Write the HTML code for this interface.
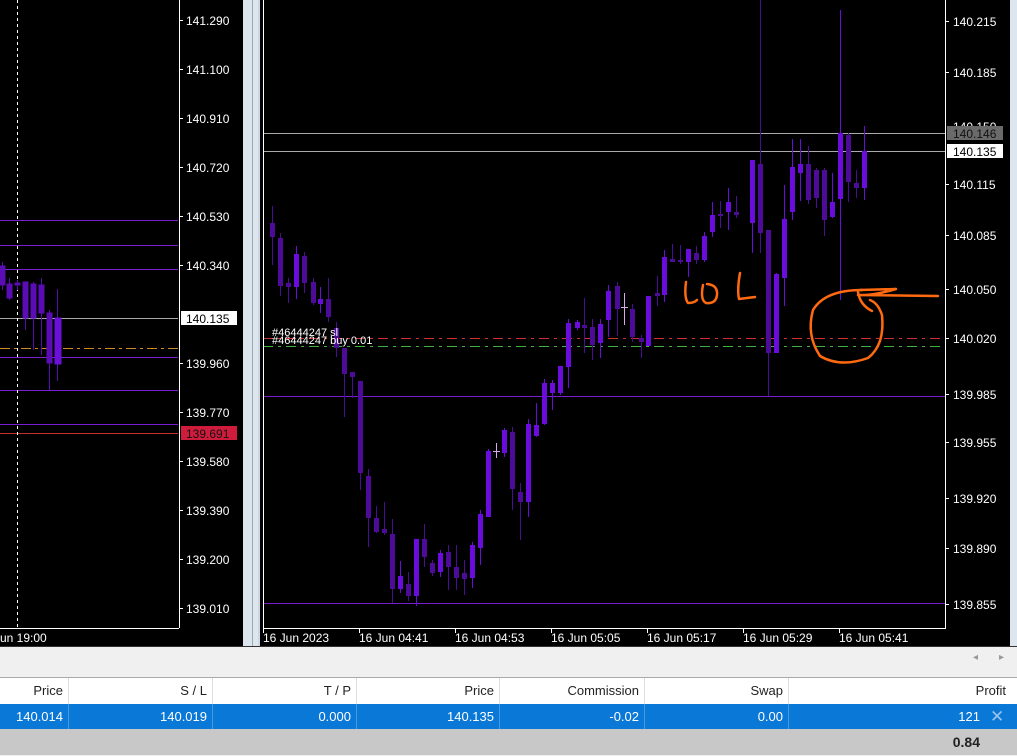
<!DOCTYPE html>
<html><head><meta charset="utf-8"><style>
body{margin:0;width:1017px;height:755px;overflow:hidden;background:#f0f0f0;font-family:"Liberation Sans",sans-serif;position:relative}
svg text{font-family:"Liberation Sans",sans-serif;font-size:12px;fill:#fff}
.tb{position:absolute;left:0;width:1017px;font-size:13px;color:#222}
.c{position:absolute;top:0;height:100%;text-align:right;box-sizing:border-box;padding-right:5px;line-height:25px}
</style></head><body>
<svg width="1017" height="647" style="position:absolute;left:0;top:0">
<rect x="0" y="0" width="1017" height="647" fill="#000"/>
<rect x="243" y="0" width="15" height="647" fill="#dde6ef"/>
<rect x="252" y="0" width="1" height="647" fill="#9aa"/>
<rect x="258" y="0" width="2" height="647" fill="#cfd8e2"/>
<rect x="1010" y="0" width="7" height="647" fill="#dde6ef"/>
<g stroke-width="1">
<line x1="0" y1="220.5" x2="178" y2="220.5" stroke="#7a1fd0"/>
<line x1="0" y1="245.5" x2="178" y2="245.5" stroke="#7a1fd0"/>
<line x1="0" y1="269.5" x2="178" y2="269.5" stroke="#7a1fd0"/>
<line x1="0" y1="318.5" x2="178" y2="318.5" stroke="#aaa"/>
<line x1="0" y1="348.5" x2="178" y2="348.5" stroke="#d08a20" stroke-dasharray="10,4,3,4"/>
<line x1="0" y1="357.5" x2="178" y2="357.5" stroke="#7a1fd0"/>
<line x1="0" y1="390.5" x2="178" y2="390.5" stroke="#7a1fd0"/>
<line x1="0" y1="424.5" x2="178" y2="424.5" stroke="#7a1fd0"/>
<line x1="0" y1="433.5" x2="178" y2="433.5" stroke="#c03030"/>
<line x1="17.5" y1="0" x2="17.5" y2="628" stroke="#fff" stroke-dasharray="3,3"/>
</g>
<g fill="#5a0db5" stroke="#5a0db5">
<line x1="2.5" y1="262" x2="2.5" y2="290"/><rect x="0" y="266" width="5" height="19"/>
<line x1="9.5" y1="278" x2="9.5" y2="300"/><rect x="7" y="284" width="5" height="14"/>
<line x1="17.5" y1="280" x2="17.5" y2="290"/><rect x="15" y="283" width="5" height="2"/>
<line x1="25.5" y1="282" x2="25.5" y2="330"/><rect x="23" y="282" width="5" height="36"/>
<line x1="33.5" y1="282" x2="33.5" y2="350"/><rect x="31" y="284" width="5" height="34"/>
<line x1="41.5" y1="278" x2="41.5" y2="355"/><rect x="39" y="285" width="5" height="28"/>
<line x1="49.5" y1="310" x2="49.5" y2="390"/><rect x="47" y="313" width="5" height="50"/>
<line x1="57.5" y1="289" x2="57.5" y2="381"/><rect x="55" y="318" width="6" height="46" fill="#6a10d8" stroke="#6a10d8"/>
</g>
<line x1="179.5" y1="0" x2="179.5" y2="628" stroke="#fff"/>
<line x1="0" y1="628.5" x2="179" y2="628.5" stroke="#fff"/>
<g stroke="#fff">
<line x1="179" y1="20.5" x2="183" y2="20.5"/><line x1="179" y1="69.5" x2="183" y2="69.5"/><line x1="179" y1="118.5" x2="183" y2="118.5"/><line x1="179" y1="167.5" x2="183" y2="167.5"/><line x1="179" y1="216.5" x2="183" y2="216.5"/><line x1="179" y1="265.5" x2="183" y2="265.5"/><line x1="179" y1="363.5" x2="183" y2="363.5"/><line x1="179" y1="412.5" x2="183" y2="412.5"/><line x1="179" y1="461.5" x2="183" y2="461.5"/><line x1="179" y1="510.5" x2="183" y2="510.5"/><line x1="179" y1="559.5" x2="183" y2="559.5"/><line x1="179" y1="608.5" x2="183" y2="608.5"/>
</g>
<g>
<text x="186" y="25">141.290</text><text x="186" y="74">141.100</text><text x="186" y="123">140.910</text><text x="186" y="172">140.720</text><text x="186" y="221">140.530</text><text x="186" y="270">140.340</text>
<rect x="181" y="311" width="56" height="14" fill="#fff"/><text x="186" y="323" style="fill:#000">140.135</text>
<text x="186" y="368">139.960</text><text x="186" y="417">139.770</text>
<rect x="181" y="426" width="56" height="14" fill="#d01c3c"/><text x="186" y="438" style="fill:#111">139.691</text>
<text x="186" y="466">139.580</text><text x="186" y="515">139.390</text><text x="186" y="564">139.200</text><text x="186" y="613">139.010</text>
<text x="0" y="642">un 19:00</text>
</g>
<g>
<line x1="263" y1="133.5" x2="945" y2="133.5" stroke="#aaa"/>
<line x1="263" y1="151.5" x2="945" y2="151.5" stroke="#aaa"/>
<line x1="263" y1="396.5" x2="945" y2="396.5" stroke="#7a1fd0"/>
<line x1="263" y1="603.5" x2="945" y2="603.5" stroke="#7a1fd0"/>
<line x1="263" y1="338.5" x2="945" y2="338.5" stroke="#d03030" stroke-dasharray="10,5,3,5"/>
<line x1="263" y1="346.5" x2="945" y2="346.5" stroke="#40b040" stroke-dasharray="10,5,3,5"/>
</g>
<g id="cd"></g>
<g fill="#fff"><text x="272" y="336" style="font-size:11px">#46444247 sl</text><text x="272" y="344" style="font-size:11px">#46444247 buy 0.01</text></g>
<line x1="263.5" y1="0" x2="263.5" y2="628" stroke="#fff"/>
<line x1="945.5" y1="0" x2="945.5" y2="628" stroke="#fff"/>
<line x1="263" y1="628.5" x2="946" y2="628.5" stroke="#fff"/>
<g stroke="#fff">
<line x1="945" y1="21.5" x2="949" y2="21.5"/><line x1="945" y1="72.5" x2="949" y2="72.5"/><line x1="945" y1="184.5" x2="949" y2="184.5"/><line x1="945" y1="235.5" x2="949" y2="235.5"/><line x1="945" y1="289.5" x2="949" y2="289.5"/><line x1="945" y1="338.5" x2="949" y2="338.5"/><line x1="945" y1="394.5" x2="949" y2="394.5"/><line x1="945" y1="442.5" x2="949" y2="442.5"/><line x1="945" y1="498.5" x2="949" y2="498.5"/><line x1="945" y1="548.5" x2="949" y2="548.5"/><line x1="945" y1="604.5" x2="949" y2="604.5"/>
<line x1="263.5" y1="628" x2="263.5" y2="633"/><line x1="359.5" y1="628" x2="359.5" y2="633"/><line x1="455.5" y1="628" x2="455.5" y2="633"/><line x1="551.5" y1="628" x2="551.5" y2="633"/><line x1="647.5" y1="628" x2="647.5" y2="633"/><line x1="743.5" y1="628" x2="743.5" y2="633"/><line x1="839.5" y1="628" x2="839.5" y2="633"/>
</g>
<g>
<text x="953" y="26">140.215</text><text x="953" y="77">140.185</text><text x="953" y="131">140.150</text>
<rect x="947" y="126" width="56" height="14" fill="#6a6a6a"/><text x="953" y="138" style="fill:#111">140.146</text>
<rect x="947" y="144" width="56" height="14" fill="#fff"/><text x="953" y="156" style="fill:#000">140.135</text>
<text x="953" y="189">140.115</text><text x="953" y="240">140.085</text><text x="953" y="294">140.050</text><text x="953" y="343">140.020</text><text x="953" y="399">139.985</text><text x="953" y="447">139.955</text><text x="953" y="503">139.920</text><text x="953" y="553">139.890</text><text x="953" y="609">139.855</text>
<text x="263" y="642">16 Jun 2023</text><text x="359" y="642">16 Jun 04:41</text><text x="455" y="642">16 Jun 04:53</text><text x="551" y="642">16 Jun 05:05</text><text x="647" y="642">16 Jun 05:17</text><text x="743" y="642">16 Jun 05:29</text><text x="839" y="642">16 Jun 05:41</text>
</g>
<g fill="none" stroke="#ff6a10" stroke-width="2.5" stroke-linecap="round" stroke-linejoin="round">
<path d="M686 282 Q684 298 688 303 Q694 303 697 300"/>
<path d="M703 285 Q700 300 706 303 Q716 304 717 295 Q718 285 707 284"/>
<path d="M740 273 Q737 290 739 299 L755 297"/>
<path d="M862 290 Q825 290 813 310 Q806 335 820 356 Q840 368 868 358 Q885 345 882 315 Q878 303 870 300"/>
<path d="M860 290 L896 289 Q872 296 858 295 L938 296"/>
<path d="M858 292 Q860 305 872 311"/>
</g>
</svg>
<div style="position:absolute;left:0;top:646px;width:1017px;height:1px;background:#333"></div>
<div style="position:absolute;left:973px;top:652px;color:#999;font-size:10px">◂</div>
<div style="position:absolute;left:999px;top:652px;color:#999;font-size:10px">▸</div>
<div class="tb" style="top:677px;height:1px;background:#aaa"></div>
<div class="tb" style="top:678px;height:26px;background:#fff">
<div class="c" style="left:0;width:69px;border-right:1px solid #ddd">Price</div>
<div class="c" style="left:69px;width:144px;border-right:1px solid #ddd">S / L</div>
<div class="c" style="left:213px;width:144px;border-right:1px solid #ddd">T / P</div>
<div class="c" style="left:357px;width:143px;border-right:1px solid #ddd">Price</div>
<div class="c" style="left:500px;width:145px;border-right:1px solid #ddd">Commission</div>
<div class="c" style="left:645px;width:144px;border-right:1px solid #ddd">Swap</div>
<div class="c" style="left:789px;width:222px">Profit</div>
</div>
<div class="tb" style="top:704px;height:25px;background:#0a78d7;color:#fff">
<div class="c" style="left:0;width:69px;border-right:1px solid #4a9ae0">140.014</div>
<div class="c" style="left:69px;width:144px;border-right:1px solid #4a9ae0">140.019</div>
<div class="c" style="left:213px;width:144px;border-right:1px solid #4a9ae0">0.000</div>
<div class="c" style="left:357px;width:143px;border-right:1px solid #4a9ae0">140.135</div>
<div class="c" style="left:500px;width:145px;border-right:1px solid #4a9ae0">-0.02</div>
<div class="c" style="left:645px;width:144px;border-right:1px solid #4a9ae0">0.00</div>
<div class="c" style="left:789px;width:196px">121</div>
<div style="position:absolute;left:990px;top:0;line-height:25px;color:#9cc4ea;font-size:17px">✕</div>
</div>
<div class="tb" style="top:729px;height:26px;background:#c8c8c8">
<div class="c" style="left:789px;width:196px;font-weight:bold;font-size:14px;line-height:27px">0.84</div>
</div>
<script>
var C=[[272,223,237,206,265,0],[280,238,286,233,296,0],[288,283,287,278,303,0],[296,254,287,246,299,1],[304,256,283,252,293,0],[313,282,303,278,305,0],[320,299,304,287,313,1],[328,299,317,278,322,0],[336,328,348,322,357,0],[344,348,374,348,417,0],[352,372,377,372,398,0],[360,381,473,381,490,0],[368,476,518,469,547,0],[376,518,532,506,533,0],[384,529,533,502,535,0],[392,534,589,519,603,0],[400,576,589,561,593,1],[408,584,596,572,601,0],[416,539,596,539,606,1],[424,539,557,524,567,0],[432,563,573,560,576,0],[440,553,572,550,577,1],[448,552,567,545,590,0],[456,567,578,545,590,0],[464,573,579,560,595,0],[472,545,578,542,588,1],[480,514,548,510,565,1],[488,451,517,449,517,1],[504,430,453,428,457,1],[512,432,489,427,510,0],[520,492,502,483,540,0],[528,424,502,419,517,1],[536,425,436,403,437,1],[544,383,424,379,425,1],[552,383,393,380,410,1],[560,366,393,366,395,1],[568,323,367,319,388,1],[577,322,328,320,330,1],[584,325,328,298,353,0],[592,327,345,319,360,0],[600,324,343,319,358,1],[608,291,320,285,337,1],[617,286,309,282,336,0],[632,309,337,304,342,0],[641,338,342,335,358,0],[648,296,346,296,346,1],[657,293,296,276,306,0],[664,257,295,250,302,1],[672,259,262,244,262,0],[680,260,262,245,264,0],[688,249,262,251,277,1],[696,253,260,246,264,0],[704,236,260,232,262,1],[712,215,232,202,237,1],[720,214,216,201,228,0],[728,202,212,188,230,1],[736,212,215,196,218,0],[752,160,223,160,253,1],[760,164,233,0,253,0],[768,230,353,230,396,0],[776,274,353,273,353,1],[784,219,278,185,306,1],[792,167,212,139,220,1],[800,164,173,139,201,1],[808,164,200,146,204,0],[816,170,198,168,208,0],[824,170,220,168,236,0],[832,202,217,173,218,1],[840,133,199,10,300,1],[848,135,182,133,202,0],[856,183,188,170,198,0],[864,151,188,126,200,1]];
var g=document.getElementById('cd'),h='';
C.forEach(function(c){var col=c[5]?'#6a0ddc':'#4c0c98';h+='<line x1="'+(c[0]+.5)+'" y1="'+c[3]+'" x2="'+(c[0]+.5)+'" y2="'+c[4]+'" stroke="'+col+'"/><rect x="'+(c[0]-2)+'" y="'+c[1]+'" width="5" height="'+Math.max(2,c[2]-c[1])+'" fill="'+col+'"/>';});
h+='<line x1="496.5" y1="443" x2="496.5" y2="458" stroke="#d8a8e8"/><line x1="493" y1="451.5" x2="500" y2="451.5" stroke="#d8a8e8"/>';
h+='<line x1="624.5" y1="293" x2="624.5" y2="325" stroke="#d8a8e8"/><line x1="621" y1="307.5" x2="628" y2="307.5" stroke="#d8a8e8"/>';
g.innerHTML=h;
</script>
</body></html>
